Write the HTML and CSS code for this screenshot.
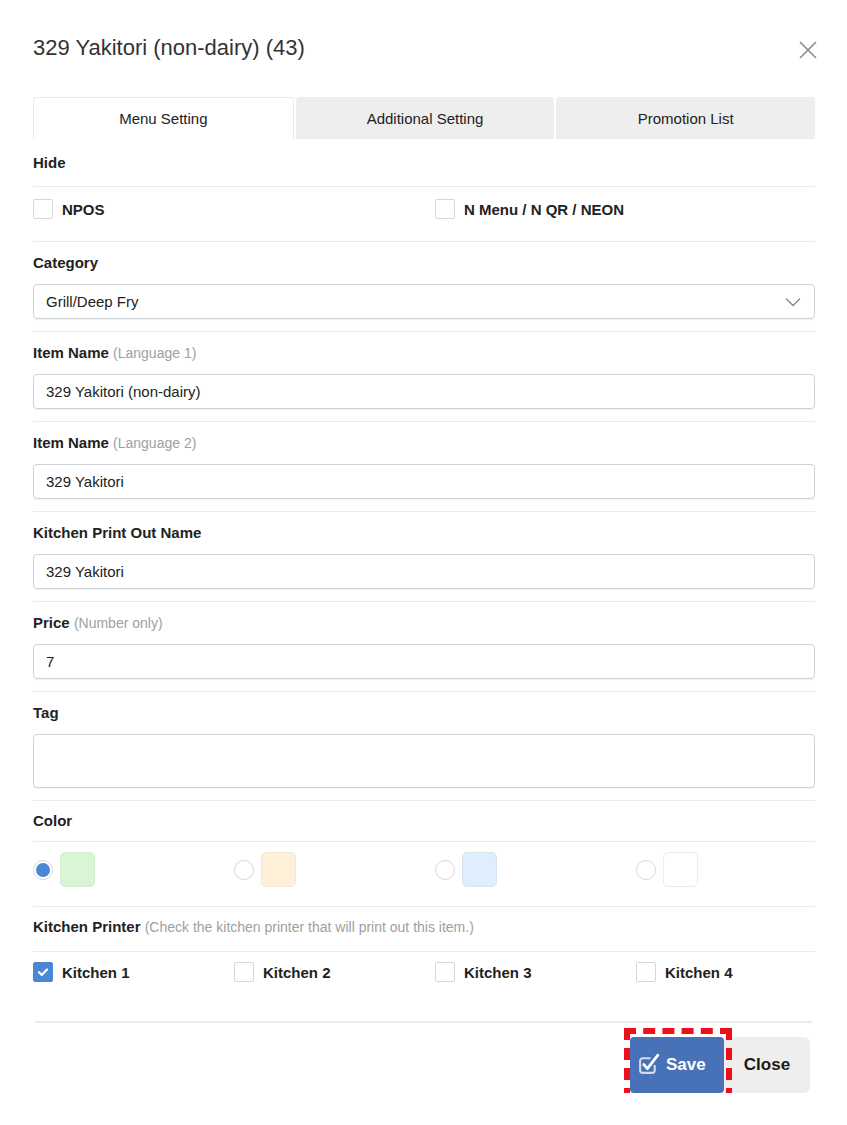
FILE: index.html
```html
<!DOCTYPE html>
<html lang="en">
<head>
<meta charset="utf-8">
<title>329 Yakitori (non-dairy) (43)</title>
<link rel="stylesheet" href="styles.css">
</head>
<body>
<div class="modal">
  <div class="header">
    <h1 class="title">329 Yakitori (non-dairy) (43)</h1>
    <svg class="close-x" width="18" height="18" viewBox="0 0 18 18"><path d="M1 1 L17 17 M17 1 L1 17" stroke="#8a8a8a" stroke-width="1.6" fill="none"/></svg>
  </div>

  <div class="tabs">
    <div class="tab active">Menu Setting</div>
    <div class="tab">Additional Setting</div>
    <div class="tab">Promotion List</div>
  </div>

  <div class="label-row first"><span class="lbl">Hide</span></div>
  <div class="check-row two">
    <label class="chk"><span class="box"></span><span class="chk-text">NPOS</span></label>
    <label class="chk"><span class="box"></span><span class="chk-text">N Menu / N QR / NEON</span></label>
  </div>

  <div class="group">
    <div class="lbl">Category</div>
    <div class="field select">Grill/Deep Fry
      <svg class="chev" width="16" height="10" viewBox="0 0 16 10"><path d="M1 1.5 L8 8.5 L15 1.5" stroke="#8a8a8a" stroke-width="1.4" fill="none"/></svg>
    </div>
  </div>

  <div class="group">
    <div class="lbl">Item Name <span class="hint">(Language 1)</span></div>
    <div class="field">329 Yakitori (non-dairy)</div>
  </div>

  <div class="group">
    <div class="lbl">Item Name <span class="hint">(Language 2)</span></div>
    <div class="field">329 Yakitori</div>
  </div>

  <div class="group">
    <div class="lbl">Kitchen Print Out Name</div>
    <div class="field">329 Yakitori</div>
  </div>

  <div class="group">
    <div class="lbl">Price <span class="hint">(Number only)</span></div>
    <div class="field">7</div>
  </div>

  <div class="group">
    <div class="lbl">Tag</div>
    <div class="field tag"></div>
  </div>

  <div class="label-row"><span class="lbl">Color</span></div>
  <div class="color-row">
    <div class="color-opt"><span class="radio checked"></span><span class="swatch green"></span></div>
    <div class="color-opt"><span class="radio"></span><span class="swatch orange"></span></div>
    <div class="color-opt"><span class="radio"></span><span class="swatch blue"></span></div>
    <div class="color-opt"><span class="radio"></span><span class="swatch white"></span></div>
  </div>

  <div class="label-row kp"><span class="lbl">Kitchen Printer <span class="hint">(Check the kitchen printer that will print out this item.)</span></span></div>
  <div class="check-row four">
    <label class="chk"><span class="box checked"><svg width="12" height="10" viewBox="0 0 12 10"><path d="M2 5.2 L4.8 8 L10 2.5" stroke="#fff" stroke-width="2.2" fill="none" stroke-linecap="round" stroke-linejoin="round"/></svg></span><span class="chk-text">Kitchen 1</span></label>
    <label class="chk"><span class="box"></span><span class="chk-text">Kitchen 2</span></label>
    <label class="chk"><span class="box"></span><span class="chk-text">Kitchen 3</span></label>
    <label class="chk"><span class="box"></span><span class="chk-text">Kitchen 4</span></label>
  </div>

  <div class="footer">
    <button class="btn save">
      <svg class="save-ico" width="25" height="25" viewBox="0 0 24 24"><path d="M17 12.5 V17.5 A2.5 2.5 0 0 1 14.5 20 H5.5 A2.5 2.5 0 0 1 3 17.5 V8.5 A2.5 2.5 0 0 1 5.5 6 H13" stroke="rgba(255,255,255,0.75)" stroke-width="2" fill="none"/><path d="M6.5 12 L10 16 L20 3" stroke="#fff" stroke-width="2.6" fill="none" stroke-linecap="round" stroke-linejoin="round"/></svg>
      <span>Save</span>
    </button>
    <button class="btn close">Close</button>
  </div>
</div>
</body>
</html>
```

FILE: styles.css
```css
* { box-sizing: border-box; }

html, body {
  margin: 0;
  padding: 0;
  background: #fff;
}

body {
  font-family: "Liberation Sans", Arial, sans-serif;
  color: #222;
  font-size: 15px;
}

.modal {
  width: 847px;
  padding: 0 32px 0 33px;
}

.header {
  display: flex;
  justify-content: space-between;
  align-items: center;
  padding-top: 36px;
  margin-bottom: 37px;
  height: 60px;
}

.title {
  margin: 0;
  font-size: 22px;
  font-weight: normal;
  line-height: 24px;
  color: #333;
}

.close-x {
  margin-right: -2px;
  margin-top: 4px;
}

.tabs {
  display: flex;
  gap: 2px;
  height: 42px;
}

.tab {
  flex: 1;
  display: flex;
  align-items: center;
  justify-content: center;
  background: #eeeeee;
  color: #222;
  font-size: 15px;
  border-radius: 4px 4px 0 0;
}

.tab.active {
  background: #fff;
  border: 1px solid #eaeaea;
  border-bottom: none;
}

.lbl {
  font-weight: bold;
  font-size: 15px;
  line-height: 18px;
  color: #222;
}

.hint {
  font-weight: normal;
  font-size: 14px;
  color: #a0a0a0;
}

.label-row {
  padding: 11px 0;
  border-bottom: 1px solid #ececec;
  display: flex;
  align-items: center;
}

.label-row.first {
  padding: 15px 0 14px;
}

.label-row.kp {
  padding: 11px 0 15px;
}

.check-row {
  display: grid;
  padding: 12px 0 22px;
  border-bottom: 1px solid #ececec;
}

.check-row.two {
  grid-template-columns: 402px 402px;
}

.check-row.four {
  grid-template-columns: repeat(4, 201px);
  padding: 10px 0 39px;
  border-bottom: none;
}

.chk {
  display: flex;
  align-items: center;
  gap: 9px;
}

.box {
  width: 20px;
  height: 20px;
  border: 1px solid #d6d6d6;
  border-radius: 2px;
  background: #fff;
  display: flex;
  align-items: center;
  justify-content: center;
}

.box.checked {
  background: #4a87d6;
  border-color: #4a87d6;
}

.chk-text {
  font-weight: bold;
  font-size: 15px;
  color: #222;
}

.group {
  padding: 12px 0;
  border-bottom: 1px solid #ececec;
}

.group .lbl {
  margin-bottom: 12px;
}

.field {
  height: 35px;
  border: 1px solid #cfd3d8;
  border-radius: 4px;
  padding: 0 12px;
  display: flex;
  align-items: center;
  font-size: 15px;
  color: #222;
  box-shadow: 0 1px 1px rgba(0,0,0,0.06);
}

.field.select {
  justify-content: space-between;
}

.chev {
  margin-right: 1px;
}

.field.tag {
  height: 54px;
}

.color-row {
  display: grid;
  grid-template-columns: repeat(4, 201px);
  padding: 10px 0 19px;
  border-bottom: 1px solid #ececec;
}

.color-opt {
  display: flex;
  align-items: center;
  gap: 7px;
}

.radio {
  width: 20px;
  height: 20px;
  border-radius: 50%;
  border: 1px solid #d8d8d8;
  background: #fff;
  display: flex;
  align-items: center;
  justify-content: center;
}

.radio.checked::after {
  content: "";
  width: 14px;
  height: 14px;
  border-radius: 50%;
  background: #4a87d6;
}

.swatch {
  width: 35px;
  height: 35px;
  border-radius: 5px;
  border: 1px solid #ededed;
}

.swatch.green { background: #d9f5d6; border-color: #d3ecd0; }
.swatch.orange { background: #fff0d9; border-color: #f3e6d2; }
.swatch.blue { background: #e0edfc; border-color: #d8e4f2; }
.swatch.white { background: #fff; border-color: #ececec; }

.footer {
  margin: 0 3px 0 2px;
  border-top: 2px solid #e8ebee;
  padding-top: 14px;
  display: flex;
  justify-content: flex-end;
}

.btn {
  height: 56px;
  border: none;
  border-radius: 4px;
  font-family: "Liberation Sans", Arial, sans-serif;
  font-weight: bold;
  font-size: 17px;
  display: flex;
  align-items: center;
  justify-content: center;
  cursor: pointer;
}

.btn.save {
  position: relative;
  width: 94px;
  background: #4872b8;
  color: #fff;
  gap: 4px;
  justify-content: flex-start;
  padding: 0 0 0 7px;
}

.btn.save::after {
  content: "";
  position: absolute;
  left: -6px;
  top: -9px;
  right: -8px;
  bottom: -7px;
  border: 6px dashed #ee0f1c;
}

.save-ico {
  margin-top: -2px;
}

.btn.close {
  width: 86px;
  background: #eeeeee;
  color: #1a1a1a;
  border-radius: 0 6px 6px 0;
  margin-right: 2px;
}
```
